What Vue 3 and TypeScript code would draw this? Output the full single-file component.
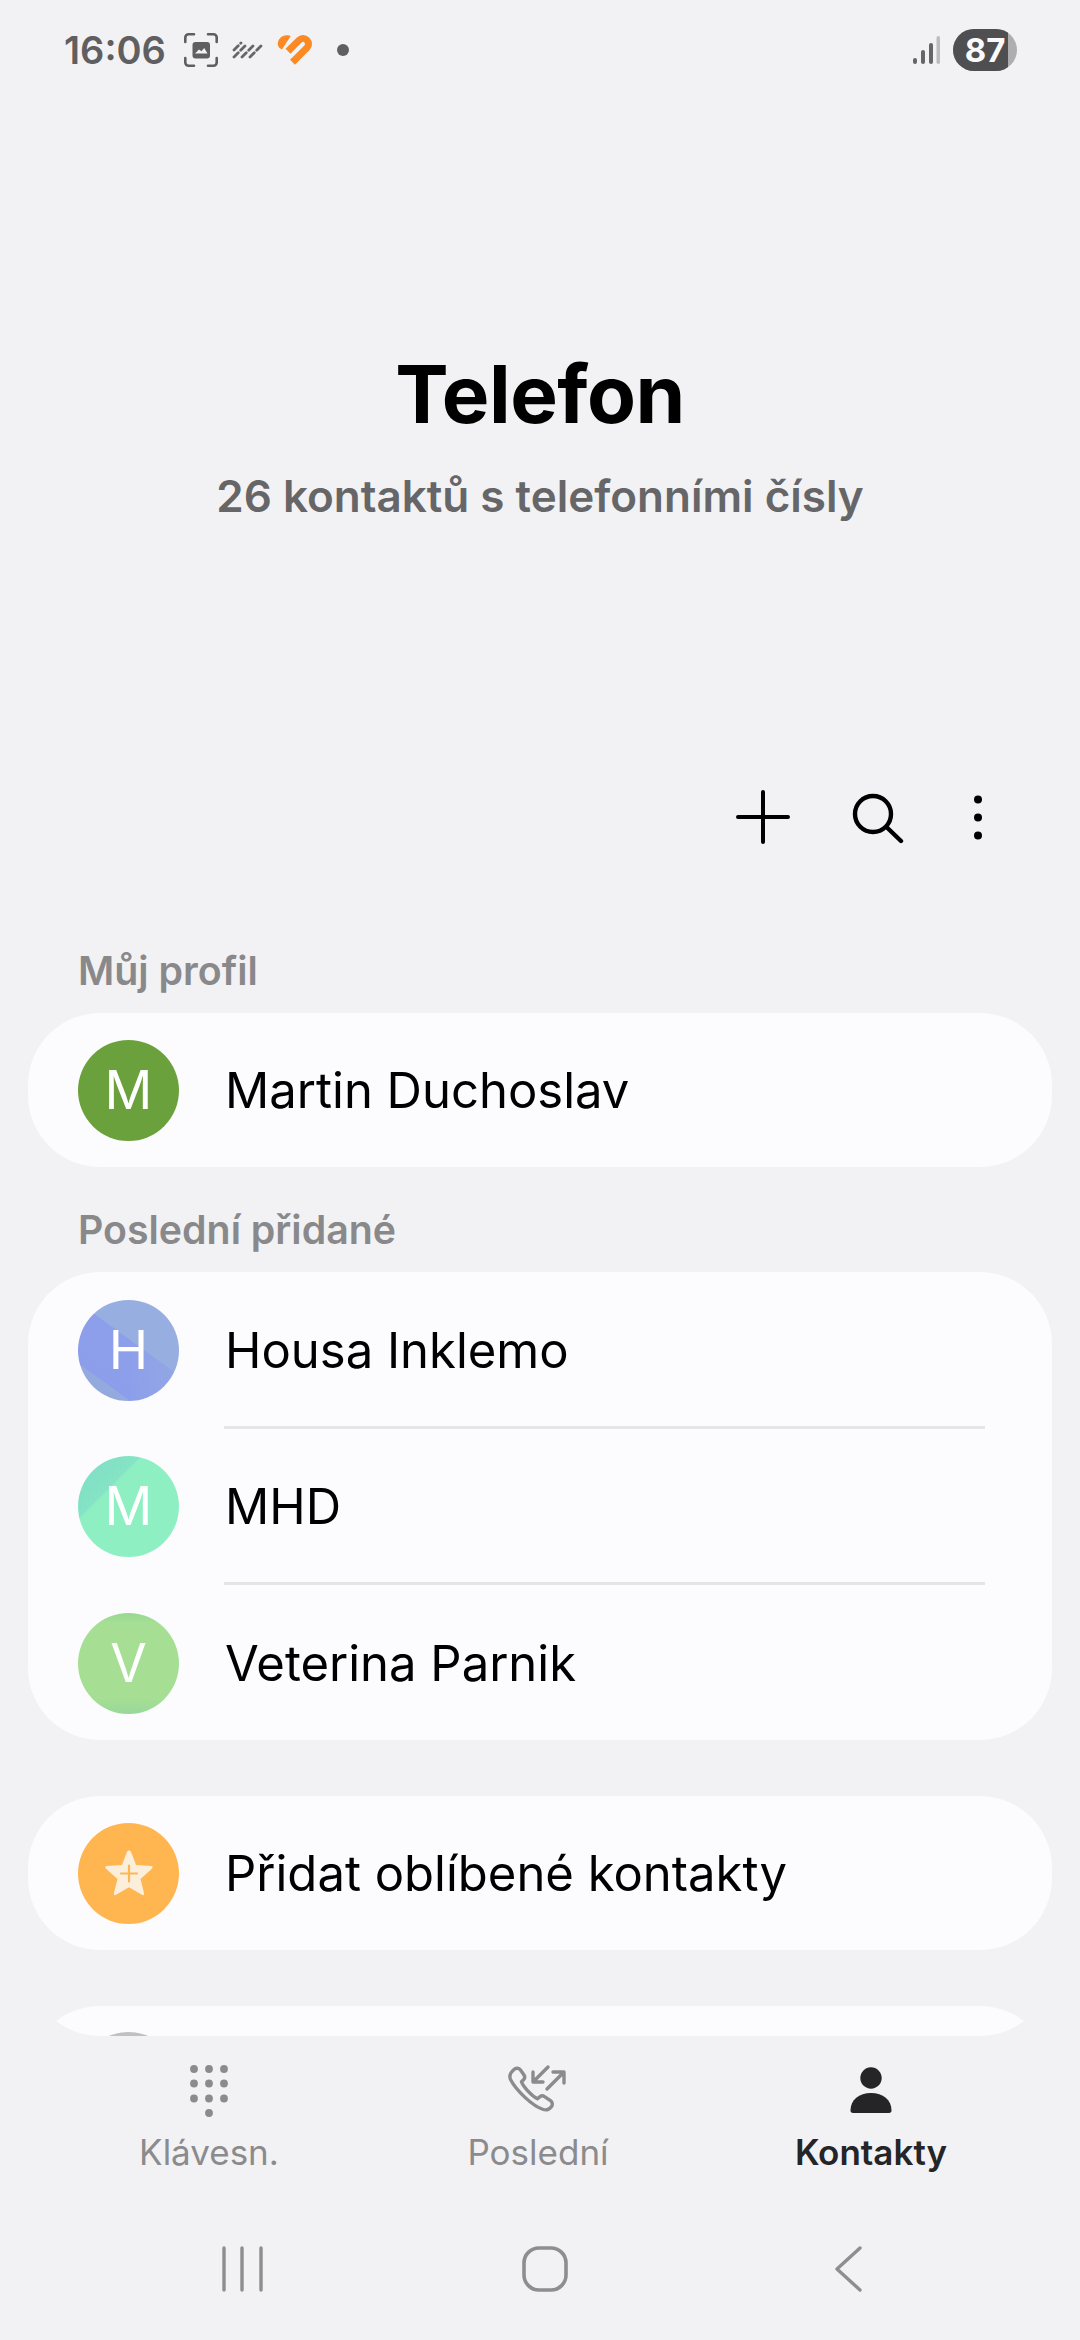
<script setup lang="ts">
const recent = [
  { name: 'Housa Inklemo', initial: 'H', cls: 'av-blue' },
  { name: 'MHD', initial: 'M', cls: 'av-mint' },
  { name: 'Veterina Parnik', initial: 'V', cls: 'av-lime' },
]
const dialDots = [
  [7, 6], [22, 6], [37, 6],
  [7, 20.500], [22, 20.500], [37, 20.500],
  [7, 35.500], [22, 35.500], [37, 35.500],
  [22, 50],
]
</script>

<template>
  <div class="screen">
    <header class="status">
      <div class="status-left">
        <span class="time">16:06</span>
        <svg class="ic-shot" width="36" height="36" viewBox="0 0 36 36" fill="none">
          <path d="M2.300 10V5.500a3.200 3.200 0 0 1 3.200-3.200H11M25 2.300h5.500a3.200 3.200 0 0 1 3.200 3.200V10M33.700 26v4.500a3.200 3.200 0 0 1-3.200 3.200H25M11 33.700H5.500a3.200 3.200 0 0 1-3.200-3.200V26" stroke="#5f5f61" stroke-width="2.600" stroke-linecap="round"/>
          <rect x="9.500" y="10" width="17.500" height="16.500" rx="3" fill="#5f5f61"/>
          <path d="M12 21.500l4-4 2.500 1.800 2.700-3.300 3.300 5.500z" fill="#f2f2f4"/>
        </svg>
        <svg class="ic-wifi" width="32" height="18" viewBox="0 0 32 18" fill="none" stroke="#666668" stroke-width="2.800" stroke-linecap="round" stroke-dasharray="6 3.500">
          <path d="M2 9 9 2M2 16 15 3M10 16 22 4M18 16 30 4"/>
        </svg>
        <svg class="ic-heart" width="36" height="32" viewBox="0 0 36 32" fill="none">
          <path d="M11 17.200 22.100 6.100a5.500 5.500 0 0 1 7.800 7.800L15.500 28.300" stroke="#fb8a24" stroke-width="7"/>
          <path d="M.8 10.500C.5 5 5 .8 10.500 1.200c1.200.1 2.300.4 3.200.9L5 15.500c-2.500-1-4-2.800-4.200-5z" fill="#fb8a24"/>
        </svg>
        <span class="dot"></span>
      </div>
      <div class="status-right">
        <svg width="28" height="30" viewBox="0 0 28 30">
          <rect x="1" y="23" width="4" height="6" rx="2" fill="#666668"/>
          <rect x="9" y="15" width="4" height="14" rx="2" fill="#666668"/>
          <rect x="17" y="8" width="4" height="21" rx="2" fill="#666668"/>
          <rect x="24.500" y="1" width="3.500" height="28" rx="1.750" fill="#bdbdbf"/>
        </svg>
        <span class="battery"><span class="battery-fill">87</span></span>
      </div>
    </header>

    <section class="hero">
      <h1>Telefon</h1>
      <p>26 kontaktů s telefonními čísly</p>
    </section>

    <nav class="toolbar">
      <button class="tool" aria-label="Přidat">
        <svg width="54" height="54" viewBox="0 0 54 54" fill="none" stroke="#000" stroke-width="4" stroke-linecap="round"><path d="M27 2v50M2 27h50"/></svg>
      </button>
      <button class="tool" aria-label="Hledat">
        <svg width="54" height="54" viewBox="0 0 54 54" fill="none" stroke="#000" stroke-width="4.400" stroke-linecap="round"><circle cx="22" cy="24" r="18"/><path d="M36.500 38 50 51"/></svg>
      </button>
      <button class="tool tool-more" aria-label="Více">
        <svg width="12" height="54" viewBox="0 0 12 54" fill="#000"><circle cx="6" cy="9.500" r="4"/><circle cx="6" cy="27.500" r="4"/><circle cx="6" cy="45.500" r="4"/></svg>
      </button>
    </nav>

    <main class="list">
      <h2 class="label">Můj profil</h2>
      <div class="card">
        <div class="row">
          <span class="avatar av-green">M</span>
          <span class="name">Martin Duchoslav</span>
        </div>
      </div>

      <h2 class="label">Poslední přidané</h2>
      <div class="card card-group">
        <div v-for="c in recent" :key="c.name" class="row row-sep">
          <span class="avatar" :class="c.cls">{{ c.initial }}</span>
          <span class="name">{{ c.name }}</span>
        </div>
      </div>

      <div class="card card-fav">
        <div class="row">
          <span class="avatar av-orange">
            <svg width="50" height="48" viewBox="0 0 50 48">
              <path d="M25 1.500c1 0 1.700.6 2.100 1.600l5 12.900 14.800 1.100c2 .2 2.300 1.500 1 2.600L36.500 30l3.600 14.300c.4 1.700-.8 2.300-2.200 1.500L25 38.200l-12.900 7.600c-1.400.8-2.600.2-2.200-1.500L13.500 30 2.100 19.700c-1.300-1.100-1-2.400 1-2.600L17.900 16l5-12.900c.4-1 1.100-1.600 2.100-1.600z" fill="#fbeedb"/>
              <path d="M25 16.500v16M17 24.500h16" stroke="#fdb653" stroke-width="2.200" stroke-linecap="round"/>
            </svg>
          </span>
          <span class="name">Přidat oblíbené kontakty</span>
        </div>
      </div>

      <div class="card card-peek">
        <span class="avatar av-grey"></span>
      </div>
    </main>

    <nav class="tabs">
      <div class="tab">
        <svg width="44" height="58" viewBox="0 0 44 58" fill="#8b8b8d">
          <circle v-for="(d, i) in dialDots" :key="i" :cx="d[0]" :cy="d[1]" r="3.900"/>
        </svg>
        <span>Klávesn.</span>
      </div>
      <div class="tab">
        <svg width="60" height="54" viewBox="0 0 60 54" fill="none" stroke="#8b8b8d" stroke-width="3.400" stroke-linecap="round" stroke-linejoin="round">
          <path d="M6 4.500c2-2 5-1.500 6.500.5l3.500 5c1 1.600.8 3.500-.5 4.800l-2 2c2 5 10 14 16 17l2.500-2.200c1.400-1 3-1 4.500 0l6 4c2 1.500 2.400 4.300.8 6.200-2 2.400-4.800 3.700-8 2.700C24 41 8 25 2.500 14.500 1 11 3 7 6 4.500z"/>
          <path d="M40 2 26 16M25 7v10h10M39 24 55 8M45 7h11v11"/>
        </svg>
        <span>Poslední</span>
      </div>
      <div class="tab tab-active">
        <svg width="44" height="50" viewBox="0 0 44 50" fill="#252528">
          <circle cx="22" cy="11" r="10.700"/>
          <path d="M4 46c-1.700 0-2.500-1-2.500-2.500C1.500 33 10 26 22 26s20.500 7 20.500 17.500c0 1.500-.8 2.500-2.500 2.500z"/>
        </svg>
        <span>Kontakty</span>
      </div>
    </nav>

    <footer class="gesture">
      <svg width="46" height="46" viewBox="0 0 46 46" fill="none" stroke="#8e8e90" stroke-width="3.400" stroke-linecap="round"><path d="M5 2v42M23 2v42M42 2v42"/></svg>
      <svg width="46" height="46" viewBox="0 0 46 46" fill="none" stroke="#8e8e90" stroke-width="3.600"><rect x="2" y="2" width="42" height="42" rx="15"/></svg>
      <svg class="back" width="30" height="48" viewBox="0 0 30 48" fill="none" stroke="#8e8e90" stroke-width="3.400" stroke-linecap="round" stroke-linejoin="round"><path d="M27 3 4 24l23 21"/></svg>
    </footer>
  </div>
</template>

<style>
html, body { margin: 0; background: #f2f2f4; }
</style>

<style scoped>
* { box-sizing: border-box; }
.screen {
  width: 1080px; height: 2340px; overflow: hidden; background: #f2f2f4;
  display: flex; flex-direction: column;
  font-family: Inter, "Noto Sans", sans-serif; color: #000;
}
.status {
  height: 100px; flex: none; padding-left: 64px;
  display: flex; justify-content: space-between; align-items: center;
}
.status-left { display: flex; align-items: center; }
.time { font-size: 38px; font-weight: 600; color: #5f5f61; width: 119px; }
.ic-wifi { margin-left: 13px; }
.ic-heart { margin-left: 13px; }
.dot { width: 12px; height: 12px; border-radius: 50%; background: #5f5f61; margin-left: 24px; }
.status-right { display: flex; align-items: center; gap: 13px; padding-right: 63px; }
.battery {
  width: 64px; height: 42px; border-radius: 21px; background: #aeaeb0; overflow: hidden; display: block;
}
.battery-fill {
  display: block; width: 55px; height: 42px; background: #4f4f51; color: #fafafa;
  font-size: 33px; font-weight: 700; line-height: 42px; text-align: center; padding-left: 9px;
}
.hero { height: 637px; flex: none; padding-top: 242px; text-align: center; }
.hero h1 { margin: 0; font-size: 80px; font-weight: 700; line-height: 104px; letter-spacing: -.5px; }
.hero p { margin: 20px 0 0; font-size: 44px; font-weight: 600; line-height: 60px; color: #666668; }
.toolbar {
  height: 160px; flex: none; display: flex; justify-content: flex-end; align-items: center;
  padding-right: 96px; gap: 61px; margin-bottom: 11px;
}
.tool { width: 54px; height: 54px; padding: 0; border: 0; background: none; display: flex; justify-content: center; }
.tool-more { width: 12px; margin-left: 6px; }
.list {
  height: 1128px; flex: none; overflow: hidden; margin: 0 28px;
  border-radius: 0 0 72px 72px;
}
.label {
  margin: 0; height: 105px; padding: 0 50px 18px; font-size: 39.300px; line-height: 48px; font-weight: 600;
  color: #89898b; display: flex; align-items: flex-end;
}
.card { background: #fcfcfe; border-radius: 72px; }
.row { display: flex; align-items: center; height: 154px; padding: 0 50px; }
.card-group { height: 468px; }
.row-sep { height: 156.500px; position: relative; }
.row-sep:not(:last-child)::after {
  content: ""; position: absolute; left: 196px; right: 67px; bottom: 0; height: 3px; background: #e5e5e7;
}
.avatar {
  flex: none; width: 101px; height: 101px; border-radius: 50%; display: flex; align-items: center; justify-content: center;
  color: #fff; font-size: 53px; font-weight: 400; line-height: 1;
}
.av-green { background: #6ba13c; }
.av-blue {
  background:
    linear-gradient(90deg, transparent 50%, #97aee088 100%),
    linear-gradient(216deg, #97aee0 0 43%, #8d9fea 43.500% 60%, #8c9eeb 78%, #94aadf 78.500%);
}
.av-mint { background: linear-gradient(315deg, #8ef0c2 0 68%, #84e4c4 69%, #7fdcc8 100%); }
.av-lime { background: linear-gradient(180deg, #98d894 0%, #a6df94 10%, #a6df94 84%, #98d89a 100%); }
.av-orange { background: #ffb650; }
.av-grey { background: #c0c0c2; margin: 26px 0 0 50px; }
.name { margin-left: 46px; font-size: 49px; font-weight: 400; white-space: nowrap; }
.card-fav { margin-top: 56px; }
.card-peek { margin-top: 56px; height: 200px; overflow: hidden; }
.tabs {
  height: 180px; flex: none; display: grid; grid-template-columns: 328px 330px 336px;
  padding: 27px 41px 0 45px;
}
.tab { display: flex; flex-direction: column; align-items: center; font-size: 35px; color: #8b8b8d; }
.tab svg { height: 58px; }
.tab span { margin-top: 9px; line-height: 44px; }
.tab-active { color: #252528; font-weight: 600; }
.gesture { flex: 1; display: flex; align-items: center; padding: 0 0 18px 219px; gap: 257px; }
.back { margin-left: 8px; }
</style>
